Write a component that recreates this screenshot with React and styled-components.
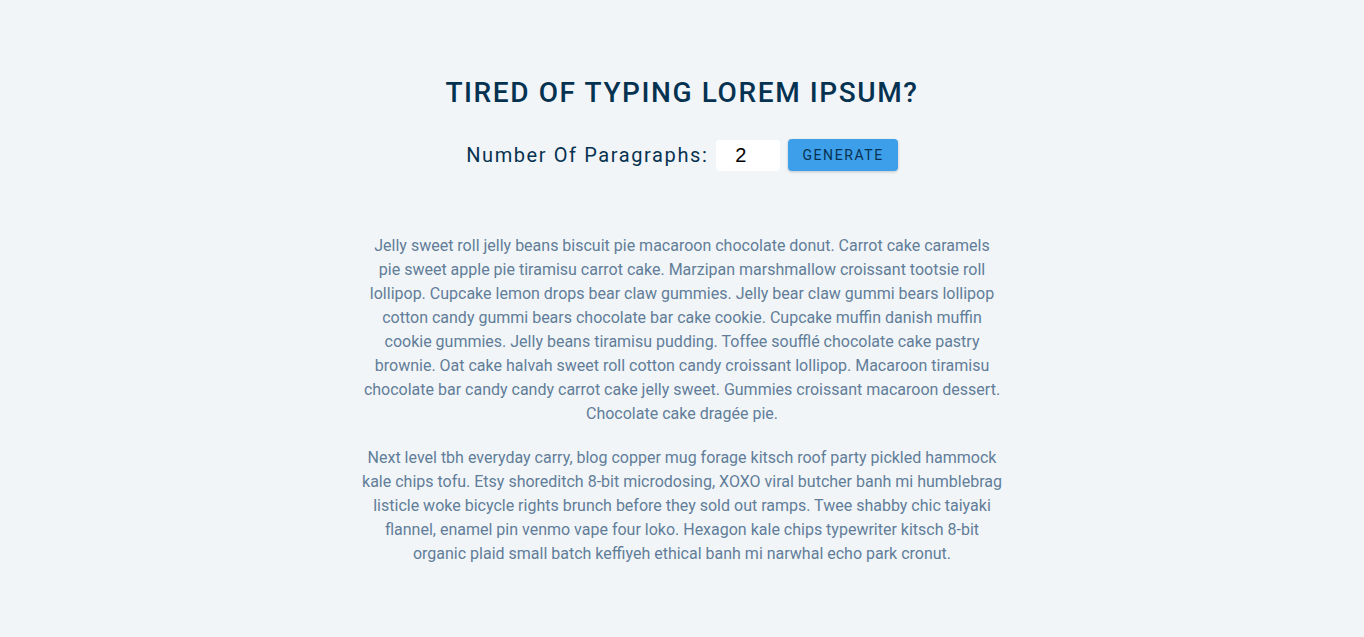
import React, { useState } from "react";
import styled, { createGlobalStyle } from "styled-components";

const GlobalStyle = createGlobalStyle`
  *, *::before, *::after { box-sizing: border-box; }
  html, body { margin: 0; padding: 0; }
  body {
    background: #f1f5f8;
    color: #102a42;
    font-family: Roboto, "Open Sans", sans-serif;
    line-height: 1.5;
    font-size: 16px;
  }
`;

const Page = styled.div`
  min-height: 637px;
  background: #f1f5f8;
`;

const Section = styled.section`
  width: 90vw;
  max-width: 40rem;
  margin: 0 auto;
  padding-top: 75px;
  text-align: center;
`;

const Title = styled.h3`
  margin: 0 0 0.75rem;
  font-size: 1.75rem;
  line-height: 1.25;
  font-weight: 500;
  letter-spacing: 0.1rem;
  text-transform: uppercase;
  color: #063251;
`;

const Form = styled.form`
  display: flex;
  justify-content: center;
  align-items: center;
  margin-top: 29px;
`;

const Label = styled.label`
  font-size: 1.25rem;
  letter-spacing: 0.1rem;
  color: #063251;
  line-height: 1.5;
`;

const Input = styled.input`
  width: 4rem;
  padding: 0.25rem 0.5rem;
  margin: 0 0.5rem;
  border: none;
  border-radius: 0.25rem;
  background: #fff;
  font-family: "Liberation Sans", Arial, sans-serif;
  font-size: 1.25rem;
  color: #000;
  text-align: center;
  outline: none;
`;

const Button = styled.button`
  display: inline-block;
  padding: 0.375rem 0.75rem;
  border: 2px solid transparent;
  border-radius: 0.25rem;
  background: #3d9fe9;
  color: #063251;
  font-family: Roboto, sans-serif;
  font-size: 0.875rem;
  font-weight: 400;
  letter-spacing: 0.1rem;
  text-transform: uppercase;
  box-shadow: 0 1px 3px rgba(0, 0, 0, 0.2);
  cursor: pointer;
`;

const TextBlock = styled.article`
  margin-top: 63px;
`;

const Paragraph = styled.p`
  margin: 0 0 1.25rem;
  color: #617d98;
  line-height: 1.5;
`;

const paragraphs = [
  "Jelly sweet roll jelly beans biscuit pie macaroon chocolate donut. Carrot cake caramels pie sweet apple pie tiramisu carrot cake. Marzipan marshmallow croissant tootsie roll lollipop. Cupcake lemon drops bear claw gummies. Jelly bear claw gummi bears lollipop cotton candy gummi bears chocolate bar cake cookie. Cupcake muffin danish muffin cookie gummies. Jelly beans tiramisu pudding. Toffee soufflé chocolate cake pastry brownie. Oat cake halvah sweet roll cotton candy croissant lollipop. Macaroon tiramisu chocolate bar candy candy carrot cake jelly sweet. Gummies croissant macaroon dessert. Chocolate cake dragée pie.",
  "Next level tbh everyday carry, blog copper mug forage kitsch roof party pickled hammock kale chips tofu. Etsy shoreditch 8-bit microdosing, XOXO viral butcher banh mi humblebrag listicle woke bicycle rights brunch before they sold out ramps. Twee shabby chic taiyaki flannel, enamel pin venmo vape four loko. Hexagon kale chips typewriter kitsch 8-bit organic plaid small batch keffiyeh ethical banh mi narwhal echo park cronut.",
];

export default function App() {
  const [count, setCount] = useState(2);
  return (
    <>
      <GlobalStyle />
      <Page>
        <Section>
          <Title>Tired of typing lorem ipsum?</Title>
          <Form onSubmit={(e) => e.preventDefault()}>
            <Label htmlFor="amount">Number Of Paragraphs:</Label>
            <Input
              type="number"
              id="amount"
              value={count}
              onChange={(e) => setCount(e.target.value)}
            />
            <Button type="submit">Generate</Button>
          </Form>
          <TextBlock>
            {paragraphs.slice(0, Math.max(0, Number(count) || 0)).map((p, i) => (
              <Paragraph key={i}>{p}</Paragraph>
            ))}
          </TextBlock>
        </Section>
      </Page>
    </>
  );
}
